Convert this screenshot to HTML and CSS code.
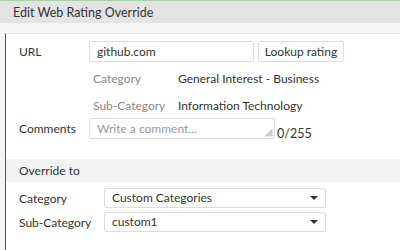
FILE: index.html
```html
<!DOCTYPE html>
<html>
<head>
<meta charset="utf-8">
<link rel="stylesheet" href="styles.css">
</head>
<body>
<div class="dialog">
  <div class="title">Edit Web Rating Override</div>
  <div class="strip"></div>
  <div class="content">
    <div class="section top">
      <div class="row url-row">
        <span class="label">URL</span>
        <div class="input url-input">github.com</div>
        <div class="btn">Lookup rating</div>
      </div>
      <div class="info-row first">
        <span class="info-label">Category</span>
        <span class="info-value">General Interest - Business</span>
      </div>
      <div class="info-row">
        <span class="info-label">Sub-Category</span>
        <span class="info-value">Information Technology</span>
      </div>
      <div class="row comment-row">
        <span class="label">Comments</span>
        <div class="input textarea">Write a comment...
          <svg class="grip" width="9" height="9" viewBox="0 0 9 9"><path d="M8.5 1L1 8.5M8.5 3L3 8.5M8.5 5L5 8.5M8.5 7L7 8.5" stroke="#888" stroke-width="0.8"/></svg>
        </div>
        <span class="count">0/255</span>
      </div>
    </div>
    <div class="band">Override to</div>
    <div class="section bottom">
      <div class="row sel-row">
        <span class="label2">Category</span>
        <div class="select"><span>Custom Categories</span><span class="caret"></span></div>
      </div>
      <div class="row sel-row">
        <span class="label2">Sub-Category</span>
        <div class="select"><span>custom1</span><span class="caret"></span></div>
      </div>
    </div>
  </div>
</div>
</body>
</html>
```
FILE: styles.css
```css
* { box-sizing: border-box; }
html, body { margin: 0; padding: 0; }
body {
  width: 400px; height: 250px; overflow: hidden;
  font-family: Lato, sans-serif;
  font-size: 12px; color: #333;
  background: #f3f3f3;
}
.dialog { display: flex; flex-direction: column; height: 250px; border-top: 1px solid #a9cfa9; }
.title {
  height: 22px; background: #e3e3e3; padding-left: 13px;
  line-height: 24px; font-size: 12.5px; color: #333;
}
.strip { height: 10px; background: #f4f4f4; }
.content {
  flex: 1; margin-left: 5px; background: #fff;
  border-left: 1px solid #555; border-top: 1px solid #e6e6e6;
}
.section.top { padding: 7px 0 0 13px; }
.row { display: flex; align-items: center; }
.label { width: 70px; }
.input {
  height: 21px; border: 1px solid #ddd; border-radius: 2px;
  padding-left: 7px; line-height: 19px;
}
.url-input { width: 165px; }
.btn {
  margin-left: 4px; height: 21px; width: 86px; border: 1px solid #ddd; border-radius: 2px;
  text-align: center; line-height: 19px; background: #fff;
}
.info-row { display: flex; height: 27px; align-items: center; padding-left: 74px; }
.info-row.first { margin-top: 3px; }
.info-label { width: 85px; color: #888; }
.info-value { color: #333; }
.comment-row { margin-top: -1px; }
.textarea { width: 186px; color: #999; position: relative; }
.grip { position: absolute; right: 1px; bottom: 1px; }
.count { margin-left: 2px; align-self: flex-end; line-height: 14px; margin-bottom: -2px; font-size: 12.5px; }
.band {
  margin-top: 20px; height: 23px; background: #f2f2f2; padding-left: 13px; line-height: 23px;
}
.section.bottom { padding: 6px 0 0 13px; display: flex; flex-direction: column; gap: 4px; }
.label2 { width: 85px; }
.select {
  width: 222px; height: 20px; border: 1px solid #ddd; border-radius: 2px;
  display: flex; align-items: center; justify-content: space-between;
  padding: 0 7px 0 7px; line-height: 18px;
}
.caret {
  width: 0; height: 0; border-left: 4px solid transparent; border-right: 4px solid transparent;
  border-top: 4px solid #333;
}
```
